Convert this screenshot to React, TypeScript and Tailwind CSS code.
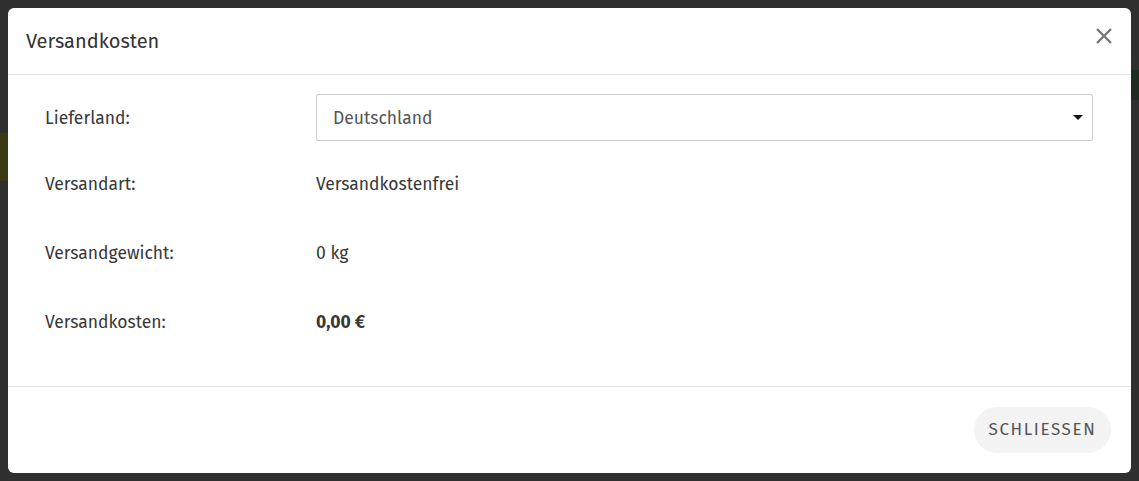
import React from "react";

export default function App() {
  const font = { fontFamily: '"Fira Sans", Lato, "Open Sans", sans-serif' };
  return (
    <div
      className="relative w-[1139px] h-[481px] bg-[#2f2f2f] p-2 overflow-hidden"
      style={font}
    >
      {/* faint page content behind the overlay */}
      <div className="absolute left-0 top-[133px] w-[8px] h-[48px] bg-[#3b3a12]" />
      <div className="absolute right-0 top-[70px] w-[8px] h-[30px] bg-[#1f2b20]" />

      <div className="relative flex h-[465px] flex-col rounded-md bg-white">
        {/* header */}
        <div className="flex h-[67px] items-center justify-between border-b border-[#e5e5e5] pl-[18px] pr-[15px]">
          <h2 className="text-[20px] font-normal text-[#333]">Versandkosten</h2>
          <button className="mb-[10px] flex h-[24px] w-[24px] items-center justify-center">
            <svg width="18" height="18" viewBox="0 0 18 18">
              <path d="M2 2 L16 16 M16 2 L2 16" stroke="#777" strokeWidth="2.4" />
            </svg>
          </button>
        </div>

        {/* body */}
        <div className="flex-1 pl-[37px] pr-[38px] pt-[19px] text-[17.5px] text-[#383838]">
          <div className="flex h-[47px] items-center">
            <div className="w-[271px] pt-[3px]">Lieferland:</div>
            <div className="relative flex h-[47px] flex-1 items-center rounded-[2px] border border-[#cccccc] pl-4 pt-[4px] text-[#555]">
              Deutschland
              <svg
                className="absolute right-[9px] top-[20px]"
                width="10"
                height="6"
                viewBox="0 0 10 6"
              >
                <path d="M0 0 L10 0 L5 5 Z" fill="#111" />
              </svg>
            </div>
          </div>
          <div className="mt-[19px] flex h-[47px] items-center pt-[3px]">
            <div className="w-[271px]">Versandart:</div>
            <div>Versandkostenfrei</div>
          </div>
          <div className="mt-[22px] flex h-[47px] items-center pt-[3px]">
            <div className="w-[271px]">Versandgewicht:</div>
            <div>0 kg</div>
          </div>
          <div className="mt-[22px] flex h-[47px] items-center pt-[3px]">
            <div className="w-[271px]">Versandkosten:</div>
            <div className="font-bold">0,00 €</div>
          </div>
        </div>

        {/* footer */}
        <div className="flex h-[87px] items-center justify-end border-t border-[#e5e5e5] pr-[20px]">
          <button className="h-[46px] w-[137px] rounded-full bg-[#f3f3f3] text-[17px] tracking-[1.6px] text-[#555]">
            SCHLIESSEN
          </button>
        </div>
      </div>
    </div>
  );
}
